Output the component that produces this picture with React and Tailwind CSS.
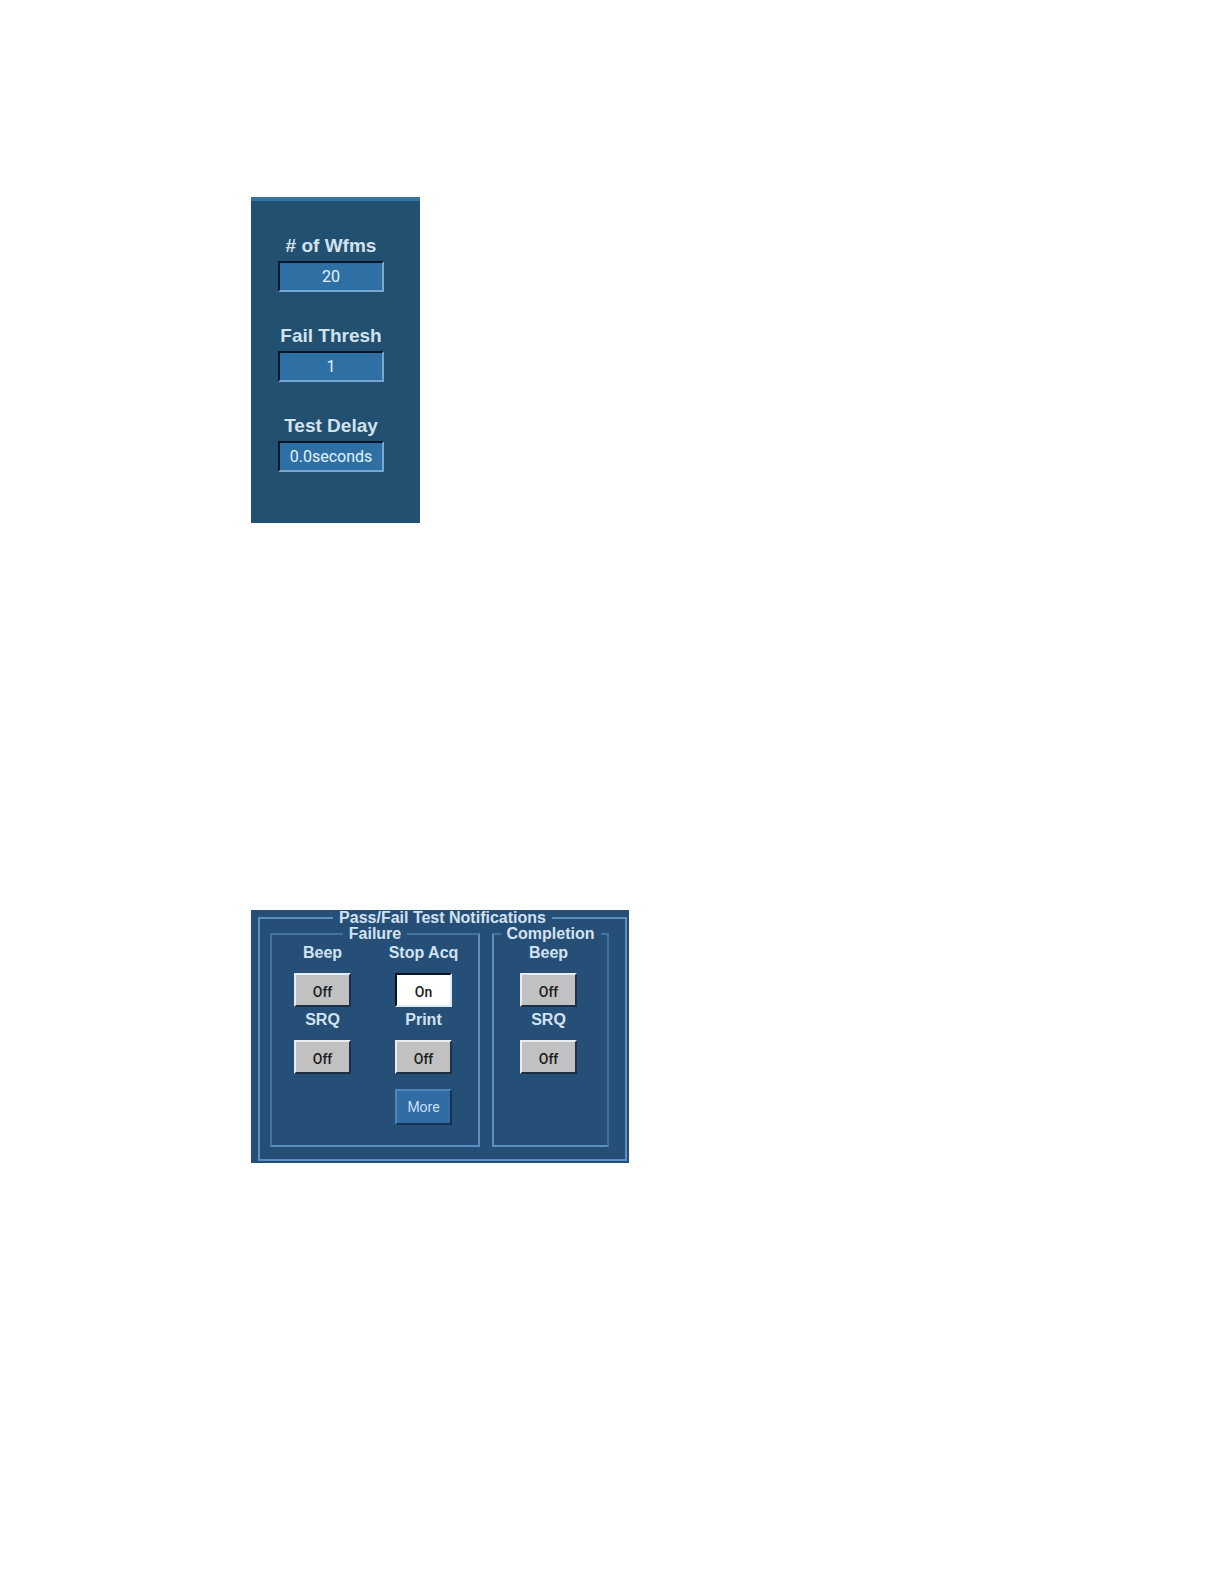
import { useState } from 'react';

const controlFont = "font-['Roboto','Liberation_Sans',sans-serif]";

function Field({ id, label, initial }) {
  const [value, setValue] = useState(initial);
  return (
    <div className="flex flex-col items-center gap-1">
      <label htmlFor={id} className="text-[19px] leading-[22px] font-bold whitespace-nowrap text-[#d3e2ee]">
        {label}
      </label>
      <input
        id={id}
        type="text"
        value={value}
        onChange={(e) => setValue(e.target.value)}
        className={`${controlFont} h-[31px] w-[106px] border-2 border-t-[#04162b] border-r-[#78a6d0] border-b-[#78a6d0] border-l-[#04162b] bg-[#2e70a3] text-center text-[16px] leading-5 text-[#e4f3ff] outline-none`}
      />
    </div>
  );
}

function Toggle({ id, label, initial = false }) {
  const [on, setOn] = useState(initial);
  const look = on
    ? 'border-t-[#06152a] border-l-[#06152a] border-r-[#dcebf8] border-b-[#dcebf8] bg-white'
    : 'border-t-[#e9edf0] border-l-[#e9edf0] border-r-[#1d3048] border-b-[#1d3048] bg-[#c1c1c1]';
  return (
    <div className="flex flex-col items-center gap-3">
      <label htmlFor={id} className="text-[16px] leading-4 font-bold whitespace-nowrap text-[#d3e2f2]">
        {label}
      </label>
      <button
        id={id}
        type="button"
        aria-pressed={on}
        onClick={() => setOn(!on)}
        className={`${controlFont} h-[34px] w-[57px] border-2 pt-1 text-[14px] leading-4 font-medium text-[#1c1c1c] ${look}`}
      >
        {on ? 'On' : 'Off'}
      </button>
    </div>
  );
}

function Group({ title, className, children }) {
  return (
    <fieldset className={`border-2 ${className}`}>
      <legend className="mx-auto px-1.5 text-[16px] leading-4 font-bold whitespace-nowrap text-[#d3e2f2]">
        {title}
      </legend>
      {children}
    </fieldset>
  );
}

export default function App() {
  return (
    <main className="flex min-h-screen flex-col items-start gap-[387px] bg-white pt-[197px] pl-[251px] font-['Liberation_Sans',sans-serif]">
      <section className="flex flex-col gap-[33px] border-t-4 border-[#33759f] bg-[#215070] pt-[34px] pr-9 pb-[51px] pl-[27px]">
        <Field id="wfms" label="# of Wfms" initial="20" />
        <Field id="thresh" label="Fail Thresh" initial="1" />
        <Field id="delay" label="Test Delay" initial="0.0seconds" />
      </section>

      <section className="bg-[#264f77] pr-0.5 pb-0.5 pl-[7px]">
        <Group title="Pass/Fail Test Notifications" className="border-[#5d8fc0]">
          <div className="flex gap-3 pr-4 pb-3 pl-[10px]">
            <Group
              title="Failure"
              className="border-t-[#45739f] border-r-[#5d8fc0] border-b-[#5d8fc0] border-l-[#45739f]"
            >
              <div className="grid grid-cols-[101px_101px] gap-y-[5px] pt-[3px] pr-1 pb-5">
                <Toggle id="fail-beep" label="Beep" />
                <Toggle id="fail-stop" label="Stop Acq" initial />
                <Toggle id="fail-srq" label="SRQ" />
                <Toggle id="fail-print" label="Print" />
                <button
                  type="button"
                  className={`${controlFont} col-start-2 mt-[10px] h-9 w-[57px] justify-self-center border-2 border-t-[#4d86bd] border-r-[#143252] border-b-[#143252] border-l-[#4d86bd] bg-[#326ca5] text-[14px] leading-5 text-[#c7dff5]`}
                >
                  More
                </button>
              </div>
            </Group>
            <Group
              title="Completion"
              className="border-t-[#45739f] border-r-[#45739f] border-b-[#5d8fc0] border-l-[#5d8fc0]"
            >
              <div className="flex flex-col gap-[5px] pt-[3px] pr-[30px] pl-[26px]">
                <Toggle id="done-beep" label="Beep" />
                <Toggle id="done-srq" label="SRQ" />
              </div>
            </Group>
          </div>
        </Group>
      </section>
    </main>
  );
}
